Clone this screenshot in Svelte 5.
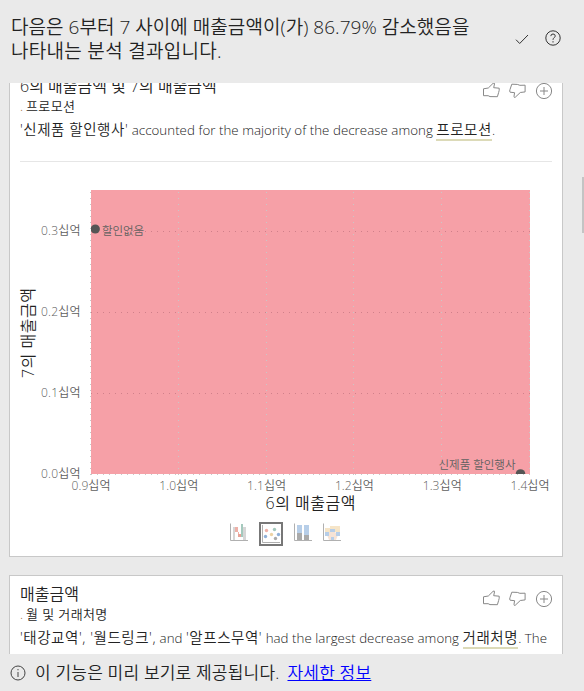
<script lang="ts">
  const xTicks = ['0.9십억', '1.0십억', '1.1십억', '1.2십억', '1.3십억', '1.4십억'].map((label, i) => ({
    label,
    x: 81 + i * 87.8
  }));
  const yTicks = ['0.3십억', '0.2십억', '0.1십억', '0.0십억'].map((label, i) => ({
    label,
    y: 69.5 + i * 81
  }));
</script>

{#snippet actions()}
  <div class="actions">
    <svg width="17" height="17" viewBox="0 0 17 17">
      <path d="M.5 6.8 5.3 6 10 1.4q1.600-1.200 1.500.5L10.700 5.700l5.500.5q.3 2-.6 4.400l-1.200 4.100-7.400-.1-1.800-.9H.5Z" />
    </svg>
    <svg width="17" height="17" viewBox="0 0 17 17">
      <path d="M2.800 2.200 1 7.500q-.7 1.700.1 2.700l4.500.5-.6 3.600q.1 1.800 1.300.9l5-4.700 4.800-.6V3.200l-5.200.1L8.300 2.400Z" />
    </svg>
    <svg width="18" height="18" viewBox="0 0 18 18">
      <circle cx="9" cy="9" r="7.6" />
      <path d="M9 5v8M5 9h8" />
    </svg>
  </div>
{/snippet}

<div class="panel">
  <header class="header">
    <h1>다음은 6부터 7 사이에 매출금액이(가) 86.79% 감소했음을<br /><span class="second">나타내는 분석 결과입니다.</span></h1>
    <svg class="check" width="14" height="11" viewBox="0 0 14 11">
      <path d="M1 5.7 4.7 9.5 13 1" />
    </svg>
    <svg class="help" width="16" height="16" viewBox="0 0 16 16">
      <circle cx="8" cy="8" r="7.2" />
      <path d="M5.8 6.1Q5.9 4 8 4q2.2 0 2.2 1.9 0 1-.9 1.7Q8 8.5 8 9.8M8 11.2v1.3" />
    </svg>
  </header>

  <main class="feed">
    <article class="card clipped">
      <div class="top">
        <div>
          <h2>6의 매출금액 및 7의 매출금액</h2>
          <p class="by"><i>.</i>프로모션</p>
        </div>
        {@render actions()}
      </div>
      <p class="text">
        <span class="ko">'신제품 할인행사'</span> accounted for the majority of the decrease among
        <u class="ko">프로모션</u>.
      </p>
      <hr />

      <svg class="chart" width="552" height="355" viewBox="0 0 552 355">
        <defs>
          <clipPath id="plot"><rect x="81" y="28" width="439" height="284" /></clipPath>
        </defs>
        <rect x="81" y="28" width="439" height="284" fill="#f6a0a7" />
        {#each xTicks as tick}
          <path class="grid" d="M{Math.round(tick.x) - 0.5} 30V313" />
          <text class="tick" x={tick.x} y="328" text-anchor="middle" textLength="39">{tick.label}</text>
        {/each}
        {#each yTicks as tick, i}
          <path class={i === 3 ? 'grid' : 'grid rose'} d="M81 {Math.floor(tick.y) + 0.5}H521" />
          <text class="tick" x="31" y={tick.y + 3.5} textLength="39.5">{tick.label}</text>
        {/each}
        <g clip-path="url(#plot)" fill="#555">
          <circle cx="85.3" cy="67" r="4.6" />
          <circle cx="510.5" cy="312" r="4.8" />
        </g>
        <text class="mark" x="92" y="73" textLength="42">할인없음</text>
        <text class="mark" x="428.5" y="307" textLength="77">신제품 할인행사</text>
        <text class="axis" x="255.5" y="347" textLength="90">6의 매출금액</text>
        <text class="axis" transform="translate(23.5 216) rotate(-90)" textLength="90">7의 매출금액</text>
      </svg>

      <div class="types">
        <svg width="18" height="19" viewBox="0 0 18 19">
          <path d="M3 4h2v13H3zM13 4h3v13h-3z" fill="#d6d6d6" />
          <path d="M5 4h3v5H5zM8 9h1v5H8z" fill="#eeb0a7" />
          <path d="M8 11h3v3H8z" fill="#e9a297" />
          <path d="M11 1h2v13h-2z" fill="#a4c9bd" />
          <path class="frame" d="M.5.5v17H18" />
        </svg>
        <svg class="selected" width="24" height="24" viewBox="0 0 24 24">
          <rect x="1" y="1" width="22" height="22" fill="#fff" stroke="#777" stroke-width="2" />
          <path class="frame" d="M3.5 3V20.5H21" />
          <circle cx="7.5" cy="8.5" r="1.7" fill="#eeb0a7" />
          <circle cx="15.5" cy="7.5" r="1.7" fill="#a4c9bd" />
          <circle cx="6.5" cy="14.5" r="1.7" fill="#8fb0d8" />
          <circle cx="12.5" cy="12.5" r="1.7" fill="#edd3a5" />
          <circle cx="19.5" cy="12.5" r="1.7" fill="#8fb0d8" />
          <circle cx="16.5" cy="16.5" r="1.7" fill="#aaa" />
        </svg>
        <svg width="18" height="19" viewBox="0 0 18 19">
          <path d="M3 2h5v9H3zM10 2h5v11h-5z" fill="#b7cee8" />
          <path d="M3 10h5v7H3zM10 12h5v5h-5z" fill="#aaa" />
          <path class="frame" d="M.5.5v17H18" />
        </svg>
        <svg width="18" height="19" viewBox="0 0 18 19">
          <path d="M2 5h5v5H2zM7 3h5v4H7zM12 3h5v6h-5z" fill="#f6e5c8" />
          <path d="M7 9h5l3 3-2 5H6l-2-5z" fill="#f6e3d6" />
          <path d="M2 9h4v4H2zM7 6h5v3H7zM13 9h4v4h-4zM8 14h3v3H8z" fill="#b7cee8" />
          <path class="frame" d="M.5.5v17H18" />
        </svg>
      </div>
    </article>

    <article class="card">
      <div class="top">
        <div>
          <h2>매출금액</h2>
          <p class="by"><i>.</i>월 및 거래처명</p>
        </div>
        {@render actions()}
      </div>
      <p class="text">
        <span class="ko">'태강교역', '월드링크',</span> and <span class="ko">'알프스무역'</span>
        had the largest decrease among <u class="ko">거래처명</u>. The
      </p>
    </article>
    <div class="thumb"></div>
  </main>

  <footer class="footer">
    <svg width="16" height="16" viewBox="0 0 16 16">
      <circle cx="8" cy="8" r="7" />
      <path d="M8 7v5M8 4v1.3" />
    </svg>
    <span class="note">이 기능은 미리 보기로 제공됩니다.</span>
    <a href="#more">자세한 정보</a>
  </footer>
</div>

<style>
  :global(body) {
    background: #eaeaea;
  }

  .panel {
    display: flex;
    flex-direction: column;
    width: 584px;
    height: 691px;
    overflow: hidden;
    background: #eaeaea;
    color: #222;
    font-family: 'Open Sans', 'Noto Sans CJK KR', sans-serif;
    font-weight: 350;
  }

  svg {
    display: block;
    flex: none;
    fill: none;
  }

  h1,
  h2,
  p {
    margin: 0;
    font-weight: inherit;
    white-space: nowrap;
  }

  .header {
    display: flex;
    box-sizing: border-box;
    height: 83px;
    padding: 15px 22px 0 11px;
    stroke: #333;
  }

  h1 {
    flex: none;
    width: 504px;
    font-size: 19px;
    line-height: 24px;
    letter-spacing: 0.04px;
    stroke: none;
  }

  .second {
    letter-spacing: 0.3px;
  }

  .check {
    margin-top: 19px;
  }

  .help {
    margin: 15px 0 0 16px;
  }

  .feed {
    position: relative;
    height: 571px;
    overflow: hidden;
  }

  .card {
    box-sizing: border-box;
    width: 554px;
    height: 200px;
    margin: 18px 0 0 9px;
    padding: 7px 0 0;
    border: 1px solid #c8c8c8;
    background: #fff;
  }

  .card.clipped {
    height: 490px;
    margin-top: -16px;
  }

  .top {
    display: flex;
    justify-content: space-between;
    height: 42px;
    padding: 0 9px 0 10px;
  }

  h2 {
    height: 22px;
    font-size: 16px;
    line-height: 23px;
  }

  .by {
    display: flex;
    font-size: 13px;
    line-height: 18px;
    letter-spacing: 0.4px;
  }

  .by i {
    width: 6px;
    color: #a06830;
    font-size: 13px;
    font-style: normal;
  }

  .actions {
    display: flex;
    gap: 9px;
    margin-top: 7px;
    stroke: #888;
  }

  .text {
    padding-left: 10px;
    font-size: 13.3px;
    line-height: 26px;
    letter-spacing: 0.04px;
  }

  .ko {
    font-size: 14.5px;
    letter-spacing: 0.55px;
  }

  u {
    display: inline-block;
    height: 20px;
    line-height: 22px;
    border-bottom: 2px solid #dcdab8;
    text-decoration: none;
  }

  hr {
    height: 1px;
    margin: 18px 10px 0;
    border: 0;
    background: #e6e6e6;
  }

  .chart text {
    fill: #606060;
    font-size: 12px;
  }

  .chart .mark {
    font-size: 11.5px;
  }

  .chart .axis {
    fill: #222;
    font-size: 16px;
  }

  .grid {
    stroke: #c8c8c8;
    stroke-dasharray: 1 5;
  }

  .rose {
    stroke: #d0808a;
  }

  .types {
    display: flex;
    align-items: flex-start;
    gap: 11px;
    padding: 6px 0 0 220px;
  }

  .types .selected {
    margin-top: -1px;
  }

  .frame {
    stroke: #b0b0b0;
  }

  .thumb {
    position: absolute;
    top: 94px;
    right: 0;
    width: 2px;
    height: 56px;
    background: #c4c4c4;
  }

  .footer {
    display: flex;
    align-items: center;
    height: 37px;
    padding-left: 10px;
    font-size: 17px;
    letter-spacing: 0.2px;
    stroke: #444;
    white-space: nowrap;
  }

  .footer span,
  .footer a {
    stroke: none;
    line-height: 20px;
  }

  .note {
    margin: 0 8px 0 9px;
  }

  .footer a {
    color: #00f;
  }
</style>
